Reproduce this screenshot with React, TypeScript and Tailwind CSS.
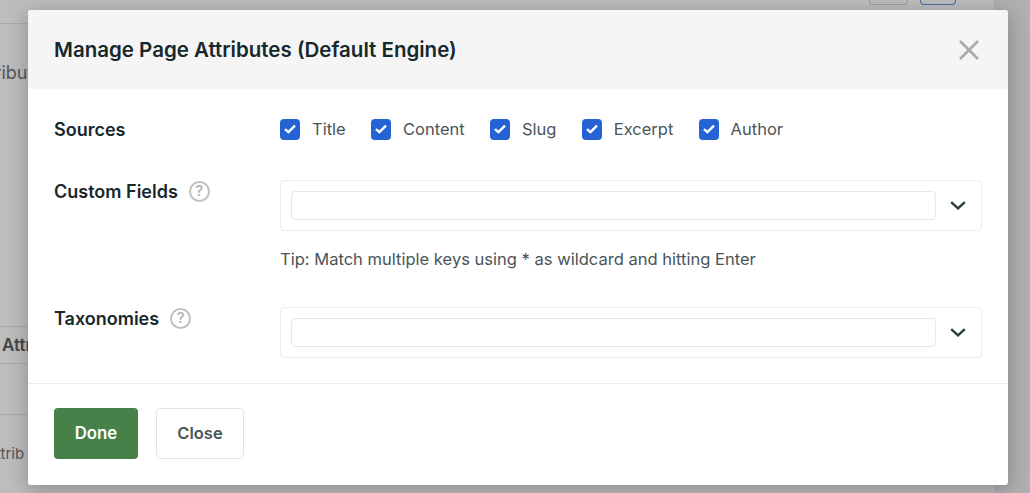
import React from 'react';

const sources = ['Title', 'Content', 'Slug', 'Excerpt', 'Author'];

function Check({ label }: { label: string }) {
  return (
    <label className="flex items-center gap-3">
      <span className="flex h-[21px] w-5 items-center justify-center rounded-[4px] bg-[#2563d4]">
        <svg width="12" height="10" viewBox="0 0 12 10" fill="none">
          <path d="M1 5.2 4.4 8.2 11 1.6" stroke="#fff" strokeWidth="2.4" />
        </svg>
      </span>
      <span className="text-[16.5px] leading-5 text-[#4a5557]">{label}</span>
    </label>
  );
}

function Help() {
  return (
    <span className="flex h-[21px] w-[21px] items-center justify-center rounded-full border-2 border-[#bfc1c1] text-[15px] font-medium text-[#aeb1b1]">
      ?
    </span>
  );
}

function SelectBox() {
  return (
    <div className="flex h-[51px] items-center rounded-[4px] border border-[#ececec] pl-[10px] pr-[15px]">
      <div className="h-[29px] flex-1 rounded-[4px] border border-[#e8e8e8]" />
      <svg width="16" height="9" viewBox="0 0 16 9" fill="none" className="ml-[14px] text-[#2c3e42]">
        <path d="M1.2 1.2 8 7.4 14.8 1.2" stroke="currentColor" strokeWidth="2.4" />
      </svg>
    </div>
  );
}

export default function App() {
  return (
    <div className="relative h-[493px] w-[1030px] overflow-hidden bg-[#b0b0b2] font-['Inter',sans-serif]">
      {/* page behind the dialog */}
      <div className="flex h-full w-[994px] flex-col bg-[#bdbdbe] text-[#555557]">
        <div className="flex h-[24px] justify-end gap-3 border-b border-[#a9a9ab] pr-[38px]">
          <div className="h-[5px] w-[39px] rounded-b-[4px] border border-t-0 border-[#9c9c9e]" />
          <div className="h-[5px] w-[36px] rounded-b-[4px] border border-t-0 border-[#4a6ea8]" />
        </div>
        <div className="h-[302px] pt-[37px] text-[18px] leading-[24px]">
          <span className="-ml-[29px] block">Attributes</span>
        </div>
        <div className="h-[38px] border-y border-[#a9a9ab] pt-[6px] text-[17px] font-semibold text-[#444446]">
          <span className="ml-[2px] block">Attributes</span>
        </div>
        <div className="h-[51px] border-b border-[#a9a9ab]" />
        <div className="pt-[28px] text-[15px]">
          <span className="-ml-[4px] block">ttrib</span>
        </div>
      </div>

      {/* dialog */}
      <div className="absolute left-[28px] top-[10px] flex h-[475px] w-[980px] flex-col rounded-[3px] bg-white shadow-[0_4px_20px_rgba(40,40,50,0.35)]">
        <div className="flex h-[79px] items-center justify-between rounded-t-[3px] bg-[#f5f5f5] px-[26px]">
          <h2 className="pt-[1px] text-[20.5px] font-semibold text-[#17282c]">Manage Page Attributes (Default Engine)</h2>
          <svg width="20" height="20" viewBox="0 0 20 20" fill="none" className="mr-[3px] text-[#a9abab]">
            <path d="M1 1 19 19M19 1 1 19" stroke="currentColor" strokeWidth="2.6" />
          </svg>
        </div>
        <div className="flex flex-1 flex-col px-[26px] pt-[29px]">
          <div className="flex">
            <div className="w-[226px] pt-[2px] text-[18px] font-semibold leading-5 text-[#17282c]">Sources</div>
            <div className="flex gap-[25.3px]">
              {sources.map((s) => (
                <Check key={s} label={s} />
              ))}
            </div>
          </div>
          <div className="mt-[40px] flex">
            <div className="mt-[1px] flex h-[21px] w-[226px] items-center gap-[11px] text-[18px] font-semibold text-[#17282c]">
              Custom Fields <Help />
            </div>
            <div className="flex-1">
              <SelectBox />
              <p className="mt-[18px] text-[16.55px] leading-5 text-[#4a5557]">Tip: Match multiple keys using * as wildcard and hitting Enter</p>
            </div>
          </div>
          <div className="mt-[38px] flex">
            <div className="mt-[1px] flex h-[21px] w-[226px] items-center gap-[11px] text-[18px] font-semibold text-[#17282c]">
              Taxonomies <Help />
            </div>
            <div className="flex-1">
              <SelectBox />
            </div>
          </div>
        </div>
        <div className="flex h-[102px] shrink-0 items-start gap-[18px] border-t border-[#ececec] pl-[26px] pt-[24px]">
          <button className="h-[51px] w-[84px] rounded-[4px] bg-[#46814a] text-[16.8px] font-semibold text-white">Done</button>
          <button className="h-[51px] w-[88px] rounded-[4px] border border-[#e4e4e4] bg-white text-[16.5px] font-semibold text-[#4a5557]">Close</button>
        </div>
      </div>
    </div>
  );
}
